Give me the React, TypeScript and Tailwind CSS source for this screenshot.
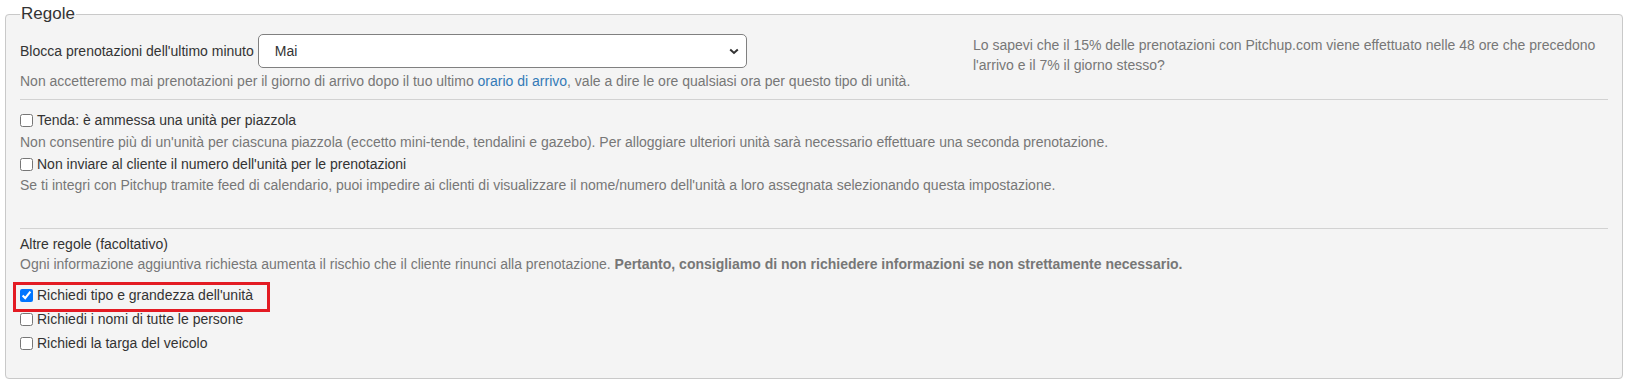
import React from "react";

function Check({ checked = false, label }: { checked?: boolean; label: string }) {
  return (
    <label className="flex items-center h-[24px] text-[14px] text-[#333]">
      <input
        type="checkbox"
        defaultChecked={checked}
        className="m-0 w-[13px] h-[13px] shrink-0"
      />
      <span className="ml-[4px] leading-5">{label}</span>
    </label>
  );
}

export default function App() {
  return (
    <div className="bg-white w-[1631px] h-[382px] pt-[4px] font-['Liberation_Sans',Arial,sans-serif]">
      <fieldset className="ml-[5px] mr-[8px] h-[375px] border border-[#c9c9c9] rounded-[4px] bg-[#f4f4f4] px-[14px] pt-[10px]">
        <legend className="px-[1px] text-[17px] leading-5 text-[#333]">Regole</legend>

        <div className="flex">
          <div className="w-[953px]">
            <div className="flex items-center h-[34px]">
              <span className="text-[14px] text-[#333] leading-5">Blocca prenotazioni dell'ultimo minuto</span>
              <div className="relative ml-[4px] w-[489px] h-[34px]">
                <select className="appearance-none w-full h-full bg-white border border-[#808080] rounded-[5px] pl-[16px] text-[14px] text-[#333] outline-none">
                  <option>Mai</option>
                </select>
                <svg
                  className="absolute right-[8px] top-[14px] pointer-events-none"
                  width="10"
                  height="7"
                  viewBox="0 0 10 7"
                >
                  <path d="M1.2 1.5 L5 5 L8.8 1.5" fill="none" stroke="#333" strokeWidth="2" />
                </svg>
              </div>
            </div>
            <p className="mt-[3px] text-[14px] leading-5 text-[#777]">
              Non accetteremo mai prenotazioni per il giorno di arrivo dopo il tuo ultimo{" "}
              <a className="text-[#337ab7]">orario di arrivo</a>, vale a dire le ore qualsiasi ora per questo tipo di
              unità.
            </p>
          </div>
          <div className="flex-1 pt-[1px] text-[14px] leading-5 text-[#777]">
            Lo sapevi che il 15% delle prenotazioni con Pitchup.com viene effettuato nelle 48 ore che precedono
            l'arrivo e il 7% il giorno stesso?
          </div>
        </div>

        <div className="mt-[8px] border-t border-[#d2d2d2]" />

        <div className="mt-[8px]">
          <Check label="Tenda: è ammessa una unità per piazzola" />
          <p className="text-[14px] leading-5 text-[#777]">
            Non consentire più di un'unità per ciascuna piazzola (eccetto mini-tende, tendalini e gazebo). Per alloggiare
            ulteriori unità sarà necessario effettuare una seconda prenotazione.
          </p>
        </div>
        <div>
          <Check label="Non inviare al cliente il numero dell'unità per le prenotazioni" />
          <p className="mt-[-1px] text-[14px] leading-5 text-[#777]">
            Se ti integri con Pitchup tramite feed di calendario, puoi impedire ai clienti di visualizzare il nome/numero
            dell'unità a loro assegnata selezionando questa impostazione.
          </p>
        </div>

        <div className="mt-[33px] border-t border-[#d2d2d2]" />

        <p className="mt-[5px] text-[14px] leading-5 text-[#333]">Altre regole (facoltativo)</p>
        <p className="text-[14px] leading-5 text-[#777]">
          Ogni informazione aggiuntiva richiesta aumenta il rischio che il cliente rinunci alla prenotazione.{" "}
          <b className="font-bold">Pertanto, consigliamo di non richiedere informazioni se non strettamente necessario.</b>
        </p>

        <div className="mt-[9px]">
          <div className="relative">
            <Check checked label="Richiedi tipo e grandezza dell'unità" />
            <div className="absolute left-[-7px] top-[-1px] w-[257px] h-[30px] border-[3px] border-[#e31b23] pointer-events-none" />
          </div>
          <Check label="Richiedi i nomi di tutte le persone" />
          <Check label="Richiedi la targa del veicolo" />
        </div>
      </fieldset>
    </div>
  );
}
